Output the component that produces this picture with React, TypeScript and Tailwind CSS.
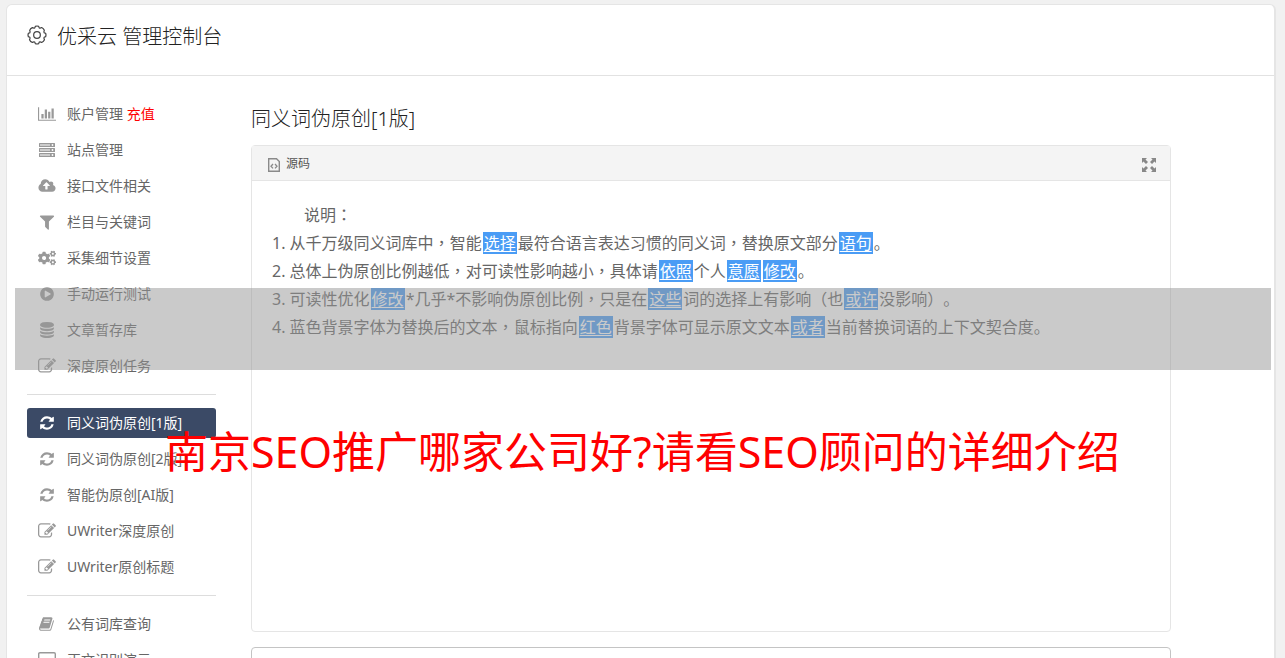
import type { ReactNode } from 'react';
import { FaCogs } from 'react-icons/fa';

type IconProps = { d: string; box?: string; className?: string };

function Glyph({ d, box = '0 0 1792 1792', className = 'size-4' }: IconProps) {
  return (
    <svg viewBox={box} className={className} fill="currentColor" aria-hidden="true">
      <path d={d} />
    </svg>
  );
}

const PATHS = {
  chart:
    'M640 896v512h-256v-512h256zM1024 384v1024h-256v-1024h256zM2048 1536v128h-2048v-1536h128v1408h1920zM1408 640v768h-256v-768h256zM1792 256v1152h-256v-1152h256z',
  cloud:
    'M1280 864q0-14-9-23l-352-352q-9-9-23-9t-23 9l-351 351q-10 12-10 24 0 14 9 23t23 9h224v352q0 13 9.5 22.5t22.5 9.5h192q13 0 22.5-9.5t9.5-22.5v-352h224q13 0 22.5-9.5t9.5-22.5zm640 288q0 159-112.5 271.5t-271.5 112.5h-1088q-185 0-316.5-131.5t-131.5-316.5q0-130 70-240t188-165q-2-30-2-43 0-212 150-362t362-150q156 0 285.5 87t188.5 231q71-62 166-62 106 0 181 75t75 181q0 76-41 138 130 31 213.5 135.5t83.5 238.5z',
  filter:
    'M1595 295q17 41-14 70l-493 493v742q0 42-39 59-13 5-25 5-27 0-45-19l-256-256q-19-19-19-45v-486l-493-493q-31-29-14-70 17-39 59-39h1280q42 0 59 39z',
  play: 'M896 128q209 0 385.5 103t279.5 279.5 103 385.5-103 385.5-279.5 279.5-385.5 103-385.5-103-279.5-279.5-103-385.5 103-385.5 279.5-279.5 385.5-103zm384 823q32-18 32-55t-32-55l-544-320q-31-19-64-1-32 19-32 56v640q0 37 32 56 16 8 32 8 17 0 32-9z',
  database:
    'M896 768q237 0 443-43t325-127v170q0 69-103 128t-280 93.5-385 34.5-385-34.5-280-93.5-103-128v-170q119 84 325 127t443 43zm0 768q237 0 443-43t325-127v170q0 69-103 128t-280 93.5-385 34.5-385-34.5-280-93.5-103-128v-170q119 84 325 127t443 43zm0-384q237 0 443-43t325-127v170q0 69-103 128t-280 93.5-385 34.5-385-34.5-280-93.5-103-128v-170q119 84 325 127t443 43zm0-1152q208 0 385 34.5t280 93.5 103 128v128q0 69-103 128t-280 93.5-385 34.5-385-34.5-280-93.5-103-128v-128q0-69 103-128t280-93.5 385-34.5z',
  edit: 'M888 1184l116-116-152-152-116 116v56h96v96h56zm440-720q-16-16-33 1l-350 350q-17 17-1 33t33-1l350-350q17-17 1-33zm80 594v190q0 119-84.5 203.5t-203.5 84.5h-832q-119 0-203.5-84.5t-84.5-203.5v-832q0-119 84.5-203.5t203.5-84.5h832q63 0 117 25 15 7 18 23 3 17-9 29l-49 49q-14 14-32 8-23-6-45-6h-832q-66 0-113 47t-47 113v832q0 66 47 113t113 47h832q66 0 113-47t47-113v-126q0-13 9-22l64-64q15-15 35-7t20 29zm-96-738l288 288-672 672h-288v-288zm444 132l-92 92-288-288 92-92q28-28 68-28t68 28l152 152q28 28 28 68t-28 68z',
  refresh:
    'M1639 1056q0 5-1 7-64 268-268 434.5t-478 166.5q-146 0-282.5-55t-243.5-157l-129 129q-19 19-45 19t-45-19-19-45v-448q0-26 19-45t45-19h448q26 0 45 19t19 45-19 45l-137 137q71 66 161 102t187 36q134 0 250-65t186-179q11-17 53-117 8-23 30-23h192q13 0 22.5 9.5t9.5 22.5zm25-800v448q0 26-19 45t-45 19h-448q-26 0-45-19t-19-45 19-45l138-138q-148-137-349-137-134 0-250 65t-186 179q-11 17-53 117-8 23-30 23h-199q-13 0-22.5-9.5t-9.5-22.5v-7q65-268 270-434.5t480-166.5q146 0 284 55.5t245 156.5l130-129q19-19 45-19t45 19 19 45z',
  book: 'M1639 478q40 57 18 129l-275 906q-19 64-76.5 107.5t-122.5 43.5h-923q-77 0-148.5-53.5t-99.5-131.5q-24-67-2-127 0-4 3-27t4-37q1-8-3-21.5t-3-19.5q2-11 8-21t16.5-23.5 16.5-23.5q23-38 45-91.5t30-91.5q3-10 .5-30t-.5-28q3-11 17-28t17-23q21-36 42-92t25-90q1-9-2.5-32t.5-28q4-13 22-30.5t22-22.5q19-26 42.5-84.5t27.5-96.5q1-8-3-25.5t-2-26.5q2-8 9-18t18-23 17-21q8-12 16.5-30.5t15-35 16-36 19.5-32 26.5-23.5 36-11.5 47.5 5.5l-1 3q38-9 51-9h761q74 0 114 56t18 130l-274 906q-36 119-71.5 153.5t-128.5 34.5h-869q-27 0-38 15-11 16-1 43 24 70 144 70h923q29 0 56-15.5t35-41.5l300-987q7-22 5-57 38 15 59 43zm-1064 2q-4 13 2 22.5t20 9.5h608q13 0 25.5-9.5t16.5-22.5l21-64q4-13-2-22.5t-20-9.5h-608q-13 0-25.5 9.5t-16.5 22.5zm-83 256q-4 13 2 22.5t20 9.5h608q13 0 25.5-9.5t16.5-22.5l21-64q4-13-2-22.5t-20-9.5h-608q-13 0-25.5 9.5t-16.5 22.5z',
};

function ServerIcon() {
  return (
    <svg viewBox="0 0 18 14" className="h-3.5 w-4.5" fill="currentColor" aria-hidden="true">
      {[0, 5, 10].map((y) => (
        <g key={y}>
          <rect x="1" y={y} width="16" height="4" rx="0.5" />
          <rect x="2" y={y + 1} width="10" height="2" fill="#ccc" />
          <circle cx="14.5" cy={y + 2} r="0.9" fill="#fff" />
        </g>
      ))}
    </svg>
  );
}

function LaptopIcon() {
  return (
    <svg viewBox="0 0 18 16" className="h-4 w-4.5" fill="none" stroke="currentColor" aria-hidden="true">
      <rect x="0.7" y="0.7" width="16.6" height="11.5" rx="1.2" strokeWidth="1.4" />
      <path d="M5 15h8M9 12v3" strokeWidth="1.6" />
    </svg>
  );
}

function GearIcon() {
  return (
    <svg viewBox="0 0 18 18" className="size-5" fill="none" stroke="#444" strokeWidth="1.1" aria-hidden="true">
      <path
        strokeLinejoin="round"
        d="M7.5 1.2Q9 .6 10.5 1.2L11 2.6Q12 3 13.2 2.3 14.8 3 15.6 4.8 15 6 15.4 7L16.8 7.5Q17.4 9 16.8 10.5L15.4 11Q15 12 15.7 13.2 15 14.8 13.2 15.7 12 15 11 15.4L10.5 16.8Q9 17.4 7.5 16.8L7 15.4Q6 15 4.8 15.7 3 15 2.3 13.2 3 12 2.6 11L1.2 10.5Q.6 9 1.2 7.5L2.6 7Q3 6 2.4 4.8 3 3 4.8 2.3 6 3 7 2.6z"
      />
      <circle cx="9" cy="9" r="3" />
    </svg>
  );
}

type Item = { label: string; icon: ReactNode; extra?: string; active?: boolean };

const refresh = <Glyph d={PATHS.refresh} />;
const edit = <Glyph d={PATHS.edit} className="size-4.5" />;

const groups: Item[][] = [
  [
    { label: '账户管理', extra: '充值', icon: <Glyph d={PATHS.chart} box="0 0 2048 1792" className="h-4 w-4.5" /> },
    { label: '站点管理', icon: <ServerIcon /> },
    { label: '接口文件相关', icon: <Glyph d={PATHS.cloud} box="0 0 1920 1792" className="h-4 w-4.5" /> },
    { label: '栏目与关键词', icon: <Glyph d={PATHS.filter} className="size-4.5" /> },
    { label: '采集细节设置', icon: <FaCogs className="size-4.5" /> },
    { label: '手动运行测试', icon: <Glyph d={PATHS.play} /> },
    { label: '文章暂存库', icon: <Glyph d={PATHS.database} /> },
    { label: '深度原创任务', icon: edit },
  ],
  [
    { label: '同义词伪原创[1版]', icon: refresh, active: true },
    { label: '同义词伪原创[2版]', icon: refresh },
    { label: '智能伪原创[AI版]', icon: refresh },
    { label: 'UWriter深度原创', icon: edit },
    { label: 'UWriter原创标题', icon: edit },
  ],
  [
    { label: '公有词库查询', icon: <Glyph d={PATHS.book} /> },
    { label: '正文识别演示', icon: <LaptopIcon /> },
  ],
];

function NavItem({ item }: { item: Item }) {
  return (
    <li>
      <a
        href="#"
        className={
          item.active
            ? 'flex h-[30px] items-center rounded-[3px] bg-[#3b4a66] pl-2.5 text-white'
            : 'flex h-[30px] items-center rounded-[3px] pl-2.5 text-[#666]'
        }
      >
        <span className={item.active ? 'flex w-5 justify-center' : 'flex w-5 justify-center text-[#999]'}>
          {item.icon}
        </span>
        <span className="ml-2.5 text-sm whitespace-nowrap">
          {item.label}
          {item.extra && <span className="text-[#f00]"> {item.extra}</span>}
        </span>
      </a>
    </li>
  );
}

function Word({ children }: { children: string }) {
  return <u className="mx-px bg-[#4a9cf5] px-px text-white underline-offset-2">{children}</u>;
}

// centred full-width punctuation
function Mid({ children }: { children: string }) {
  return (
    <span lang="zh-Hant" className="font-['Noto_Sans_CJK_TC',sans-serif] leading-none">
      {children}
    </span>
  );
}

export default function App() {
  return (
    <div className="relative h-screen overflow-hidden bg-[#f1f1f1] px-1.5 pt-1 font-['Noto_Sans','Noto_Sans_CJK_SC',sans-serif]">
      <div className="mr-[3px] min-h-full rounded-t-md border border-r-2 border-[#e5e5e5] bg-white">
        <header className="flex h-[71px] items-start border-b border-[#e2e2e2] pt-[18px] pl-5">
          <span className="mt-0.5">
            <GearIcon />
          </span>
          <h1 className="ml-2.5 text-xl/7 font-light text-[#222]">优采云 管理控制台</h1>
        </header>

        <div className="flex pl-5">
          <nav className="w-[189px] shrink-0 pt-[23px]">
            {groups.map((items, i) => (
              <ul
                key={i}
                className={i > 0 ? 'mt-[13px] flex flex-col gap-1.5 border-t border-[#ddd] pt-[13px]' : 'flex flex-col gap-1.5'}
              >
                {items.map((item) => (
                  <NavItem key={item.label} item={item} />
                ))}
              </ul>
            ))}
          </nav>

          <main className="mr-[103px] ml-[35px] min-w-0 flex-1 pt-[29px]">
            <h2 className="text-xl/7 font-light text-[#222]">同义词伪原创[1版]</h2>
            <section className="mt-3 h-[487px] rounded border border-[#e5e5e5]">
              <div className="flex h-[35px] items-center justify-between border-b border-[#e5e5e5] bg-[#f4f4f4] pr-3.5 pl-4">
                <button type="button" className="flex items-center gap-1.5 pt-0.5 text-xs text-[#555]">
                  <svg viewBox="0 0 12 14" className="mt-0.5 h-3.5 w-3" fill="none" stroke="#8a8a8a" aria-hidden="true">
                    <path d="M.7.7h7.8l2.8 2.8v9.8H.7z" strokeWidth="1.4" />
                    <path d="M5 6 3 8.200 5 10.400M7 6l2 2.200-2 2.200" strokeWidth="1.300" />
                  </svg>
                  源码
                </button>
                <button type="button" aria-label="全屏" className="mt-1">
                  <svg viewBox="0 0 14 14" className="size-3.5" fill="#888" aria-hidden="true">
                    <path d="M0 0h5L3.500 1.500l2.500 2.500-2 2L1.500 3.500 0 5zM14 0v5l-1.500-1.500L10 6 8 4l2.500-2.500L9 0zM0 14V9l1.500 1.500L4 8l2 2-2.500 2.500L5 14zM14 14H9l1.500-1.500L8 10l2-2 2.500 2.500L14 9z" />
                  </svg>
                </button>
              </div>
              <div className="pt-5 pl-5 text-base/7 text-[#666] [text-spacing-trim:space-all]">
                <p className="pl-8">
                  说明<Mid>：</Mid>
                </p>
                <ol className="whitespace-nowrap">
                  <li>
                    1. 从千万级同义词库中<Mid>，</Mid>智能<Word>选择</Word>最符合语言表达习惯的同义词<Mid>，</Mid>替换原文部分
                    <Word>语句</Word>。
                  </li>
                  <li>
                    2. 总体上伪原创比例越低<Mid>，</Mid>对可读性影响越小<Mid>，</Mid>具体请<Word>依照</Word>个人
                    <Word>意愿</Word>
                    <Word>修改</Word>。
                  </li>
                  <li>
                    3. 可读性优化<Word>修改</Word>*几乎*不影响伪原创比例<Mid>，</Mid>只是在<Word>这些</Word>词的选择上有影响（也
                    <Word>或许</Word>没影响）。
                  </li>
                  <li>
                    4. 蓝色背景字体为替换后的文本<Mid>，</Mid>鼠标指向<Word>红色</Word>背景字体可显示原文文本
                    <Word>或者</Word>当前替换词语的上下文契合度。
                  </li>
                </ol>
              </div>
            </section>
            <section className="mt-[15px] h-24 rounded-t-sm border border-[#c4c4c4]" />
          </main>
        </div>
      </div>

      <div className="absolute top-72 right-3.5 left-[15px] h-[82px] bg-[#969696]/50" />
      <p className="absolute top-[420px] left-[165px] text-[43px]/[64px] whitespace-nowrap text-[#f00]">
        南京SEO推广哪家公司好?请看SEO顾问的详细介绍
      </p>
    </div>
  );
}
